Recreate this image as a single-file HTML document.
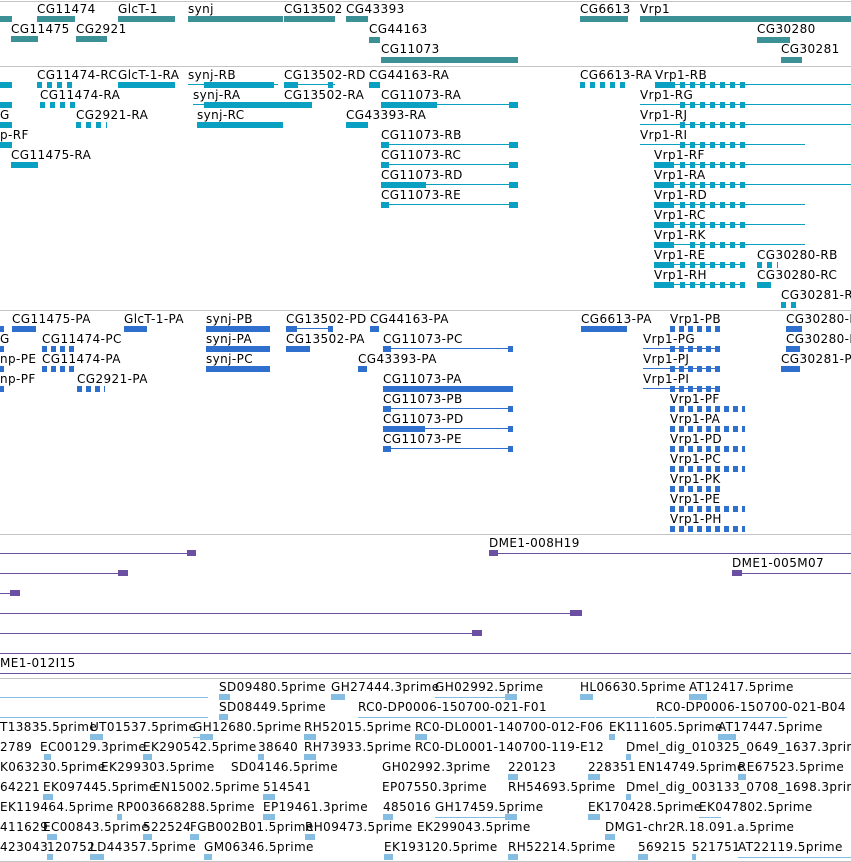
<!DOCTYPE html>
<html><head><meta charset="utf-8"><style>
body{margin:0;width:851px;height:862px;background:#fff;position:relative;overflow:hidden;font-family:"DejaVu Sans","Liberation Sans",sans-serif}
.l{position:absolute;font-size:12px;line-height:12px;white-space:nowrap;color:#000;letter-spacing:0.4px}
.b{position:absolute;height:6px}
.n{position:absolute;height:1px}
.s{position:absolute;left:0;width:851px;height:1px;background:#c4c4c4}
.g{background:#3c9196}.t{background:#0aa0c2}.p{background:#2f6fce}.u{background:#6a4fa3}.e{background:#86bde3}
.tr{background:repeating-linear-gradient(90deg,#0aa0c2 0 5px,transparent 5px 10px)}
.pr{background:repeating-linear-gradient(90deg,#2f6fce 0 5px,transparent 5px 9px)}
</style></head><body>
<div class="s" style="top:1px"></div>
<div class="l" style="left:37px;top:3px">CG11474</div><div class="b g" style="left:37px;top:16px;width:38px"></div>
<div class="b g" style="left:0;top:16px;width:12px"></div>
<div class="l" style="left:118px;top:3px">GlcT-1</div><div class="b g" style="left:118px;top:16px;width:57px"></div>
<div class="l" style="left:188px;top:3px">synj</div><div class="b g" style="left:188px;top:16px;width:95px"></div>
<div class="l" style="left:284px;top:3px">CG13502</div><div class="b g" style="left:284px;top:16px;width:51px"></div>
<div class="l" style="left:346px;top:3px">CG43393</div><div class="b g" style="left:346px;top:16px;width:22px"></div>
<div class="l" style="left:580px;top:3px">CG6613</div><div class="b g" style="left:580px;top:16px;width:48px"></div>
<div class="l" style="left:640px;top:3px">Vrp1</div><div class="b g" style="left:640px;top:16px;width:211px"></div>
<div class="l" style="left:11px;top:23px">CG11475</div><div class="b g" style="left:11px;top:36px;width:27px"></div>
<div class="l" style="left:76px;top:23px">CG2921</div><div class="b g" style="left:76px;top:36px;width:31px"></div>
<div class="l" style="left:369px;top:23px">CG44163</div><div class="b g" style="left:369px;top:37px;width:11px"></div>
<div class="l" style="left:757px;top:23px">CG30280</div><div class="b g" style="left:757px;top:37px;width:33px"></div>
<div class="l" style="left:381px;top:43px">CG11073</div><div class="b g" style="left:381px;top:57px;width:137px"></div>
<div class="l" style="left:781px;top:43px">CG30281</div><div class="b g" style="left:781px;top:57px;width:21px"></div>
<div class="s" style="top:66px"></div>
<div class="b t" style="left:0;top:82px;width:12px"></div>
<div class="l" style="left:37px;top:69px">CG11474-RC</div><div class="b tr" style="left:37px;top:82px;width:38px"></div>
<div class="l" style="left:118px;top:69px">GlcT-1-RA</div><div class="b t" style="left:118px;top:82px;width:57px"></div>
<div class="l" style="left:188px;top:69px">synj-RB</div><div class="n t" style="left:188px;top:84px;width:90px"></div><div class="b t" style="left:204px;top:82px;width:70px"></div>
<div class="l" style="left:284px;top:69px">CG13502-RD</div><div class="n t" style="left:284px;top:84px;width:51px"></div><div class="b t" style="left:284px;top:82px;width:14px"></div><div class="b t" style="left:328px;top:82px;width:5px"></div>
<div class="l" style="left:369px;top:69px">CG44163-RA</div><div class="b t" style="left:369px;top:82px;width:11px"></div>
<div class="l" style="left:580px;top:69px">CG6613-RA</div><div class="b tr" style="left:580px;top:82px;width:48px"></div>
<div class="l" style="left:655px;top:69px">Vrp1-RB</div><div class="n t" style="left:655px;top:84px;width:196px"></div><div class="b t" style="left:655px;top:82px;width:20px"></div><div class="b tr" style="left:680px;top:82px;width:65px"></div>
<div class="b t" style="left:0;top:102px;width:12px"></div>
<div class="l" style="left:40px;top:89px">CG11474-RA</div><div class="b tr" style="left:40px;top:102px;width:35px"></div>
<div class="l" style="left:193px;top:89px">synj-RA</div><div class="n t" style="left:193px;top:104px;width:90px"></div><div class="b t" style="left:204px;top:102px;width:108px"></div>
<div class="l" style="left:284px;top:89px">CG13502-RA</div>
<div class="l" style="left:381px;top:89px">CG11073-RA</div><div class="n t" style="left:381px;top:104px;width:137px"></div><div class="b t" style="left:381px;top:102px;width:56px"></div><div class="b t" style="left:509px;top:102px;width:9px"></div>
<div class="l" style="left:640px;top:89px">Vrp1-RG</div><div class="n t" style="left:640px;top:104px;width:211px"></div><div class="b tr" style="left:680px;top:102px;width:65px"></div>
<div class="l" style="left:0;top:109px">G</div><div class="b t" style="left:0;top:122px;width:12px"></div>
<div class="l" style="left:76px;top:109px">CG2921-RA</div><div class="b tr" style="left:76px;top:122px;width:31px"></div>
<div class="l" style="left:197px;top:109px">synj-RC</div><div class="b t" style="left:197px;top:122px;width:86px"></div>
<div class="l" style="left:346px;top:109px">CG43393-RA</div><div class="b t" style="left:346px;top:122px;width:22px"></div>
<div class="l" style="left:640px;top:109px">Vrp1-RJ</div><div class="n t" style="left:640px;top:124px;width:211px"></div><div class="b tr" style="left:680px;top:122px;width:65px"></div>
<div class="l" style="left:0;top:129px">p-RF</div><div class="b t" style="left:0;top:142px;width:12px"></div>
<div class="l" style="left:381px;top:129px">CG11073-RB</div><div class="n t" style="left:381px;top:144px;width:137px"></div><div class="b t" style="left:381px;top:142px;width:8px"></div><div class="b t" style="left:509px;top:142px;width:9px"></div>
<div class="l" style="left:640px;top:129px">Vrp1-RI</div><div class="n t" style="left:640px;top:144px;width:165px"></div><div class="b tr" style="left:680px;top:142px;width:65px"></div>
<div class="l" style="left:11px;top:149px">CG11475-RA</div><div class="b t" style="left:11px;top:162px;width:27px"></div>
<div class="l" style="left:381px;top:149px">CG11073-RC</div><div class="n t" style="left:381px;top:164px;width:137px"></div><div class="b t" style="left:381px;top:162px;width:8px"></div><div class="b t" style="left:509px;top:162px;width:9px"></div>
<div class="l" style="left:654px;top:149px">Vrp1-RF</div><div class="n t" style="left:654px;top:164px;width:197px"></div><div class="b t" style="left:654px;top:162px;width:20px"></div><div class="b tr" style="left:680px;top:162px;width:65px"></div>
<div class="l" style="left:381px;top:169px">CG11073-RD</div><div class="n t" style="left:381px;top:184px;width:137px"></div><div class="b t" style="left:381px;top:182px;width:45px"></div><div class="b t" style="left:509px;top:182px;width:9px"></div>
<div class="l" style="left:654px;top:169px">Vrp1-RA</div><div class="n t" style="left:654px;top:184px;width:197px"></div><div class="b t" style="left:654px;top:182px;width:20px"></div><div class="b tr" style="left:680px;top:182px;width:65px"></div>
<div class="l" style="left:381px;top:189px">CG11073-RE</div><div class="n t" style="left:381px;top:204px;width:137px"></div><div class="b t" style="left:381px;top:202px;width:8px"></div><div class="b t" style="left:509px;top:202px;width:9px"></div>
<div class="l" style="left:654px;top:189px">Vrp1-RD</div><div class="n t" style="left:654px;top:204px;width:151px"></div><div class="b t" style="left:654px;top:202px;width:20px"></div><div class="b tr" style="left:680px;top:202px;width:65px"></div>
<div class="l" style="left:654px;top:209px">Vrp1-RC</div><div class="n t" style="left:654px;top:224px;width:151px"></div><div class="b t" style="left:654px;top:222px;width:20px"></div><div class="b tr" style="left:680px;top:222px;width:65px"></div>
<div class="l" style="left:654px;top:229px">Vrp1-RK</div><div class="n t" style="left:654px;top:244px;width:151px"></div><div class="b t" style="left:654px;top:242px;width:20px"></div><div class="b tr" style="left:690px;top:242px;width:55px"></div>
<div class="l" style="left:654px;top:249px">Vrp1-RE</div><div class="n t" style="left:654px;top:264px;width:91px"></div><div class="b t" style="left:654px;top:262px;width:20px"></div><div class="b tr" style="left:680px;top:262px;width:65px"></div>
<div class="l" style="left:757px;top:249px">CG30280-RB</div><div class="b tr" style="left:757px;top:262px;width:21px"></div>
<div class="l" style="left:654px;top:269px">Vrp1-RH</div><div class="n t" style="left:654px;top:284px;width:91px"></div><div class="b t" style="left:654px;top:282px;width:20px"></div><div class="b tr" style="left:680px;top:282px;width:65px"></div>
<div class="l" style="left:757px;top:269px">CG30280-RC</div><div class="b t" style="left:757px;top:282px;width:14px"></div>
<div class="l" style="left:781px;top:289px">CG30281-R</div><div class="b tr" style="left:781px;top:302px;width:19px"></div>
<div class="s" style="top:310px"></div>
<div class="b p" style="left:0;top:326px;width:4px"></div>
<div class="l" style="left:12px;top:313px">CG11475-PA</div><div class="b p" style="left:12px;top:326px;width:24px"></div>
<div class="l" style="left:124px;top:313px">GlcT-1-PA</div><div class="b p" style="left:124px;top:326px;width:23px"></div>
<div class="l" style="left:206px;top:313px">synj-PB</div><div class="b p" style="left:206px;top:326px;width:64px"></div>
<div class="l" style="left:286px;top:313px">CG13502-PD</div><div class="n p" style="left:286px;top:328px;width:47px"></div><div class="b p" style="left:286px;top:326px;width:11px"></div><div class="b p" style="left:328px;top:326px;width:5px"></div>
<div class="l" style="left:370px;top:313px">CG44163-PA</div><div class="b p" style="left:370px;top:326px;width:9px"></div>
<div class="l" style="left:581px;top:313px">CG6613-PA</div><div class="b p" style="left:581px;top:326px;width:46px"></div>
<div class="l" style="left:670px;top:313px">Vrp1-PB</div><div class="b pr" style="left:670px;top:326px;width:50px"></div>
<div class="l" style="left:786px;top:313px">CG30280-PB</div><div class="b p" style="left:786px;top:326px;width:16px"></div>
<div class="l" style="left:0;top:333px">G</div><div class="b p" style="left:0;top:346px;width:4px"></div>
<div class="l" style="left:42px;top:333px">CG11474-PC</div><div class="b pr" style="left:42px;top:346px;width:33px"></div>
<div class="l" style="left:206px;top:333px">synj-PA</div><div class="b p" style="left:206px;top:346px;width:64px"></div>
<div class="l" style="left:286px;top:333px">CG13502-PA</div><div class="b p" style="left:286px;top:346px;width:24px"></div>
<div class="l" style="left:383px;top:333px">CG11073-PC</div><div class="n p" style="left:383px;top:348px;width:130px"></div><div class="b p" style="left:383px;top:346px;width:8px"></div><div class="b p" style="left:508px;top:346px;width:5px"></div>
<div class="l" style="left:643px;top:333px">Vrp1-PG</div><div class="n p" style="left:643px;top:348px;width:77px"></div><div class="b pr" style="left:670px;top:346px;width:50px"></div>
<div class="l" style="left:786px;top:333px">CG30280-PC</div><div class="b p" style="left:786px;top:346px;width:14px"></div>
<div class="l" style="left:0;top:353px">np-PE</div><div class="b p" style="left:0;top:366px;width:4px"></div>
<div class="l" style="left:42px;top:353px">CG11474-PA</div><div class="b pr" style="left:42px;top:366px;width:33px"></div>
<div class="l" style="left:206px;top:353px">synj-PC</div><div class="b p" style="left:206px;top:366px;width:64px"></div>
<div class="l" style="left:358px;top:353px">CG43393-PA</div><div class="b p" style="left:358px;top:366px;width:9px"></div>
<div class="l" style="left:643px;top:353px">Vrp1-PJ</div><div class="n p" style="left:643px;top:368px;width:77px"></div><div class="b pr" style="left:670px;top:366px;width:50px"></div>
<div class="l" style="left:781px;top:353px">CG30281-P</div><div class="b p" style="left:781px;top:366px;width:19px"></div>
<div class="l" style="left:0;top:373px">np-PF</div><div class="b p" style="left:0;top:386px;width:4px"></div>
<div class="l" style="left:77px;top:373px">CG2921-PA</div><div class="b pr" style="left:77px;top:386px;width:28px"></div>
<div class="l" style="left:383px;top:373px">CG11073-PA</div><div class="b p" style="left:383px;top:386px;width:130px"></div>
<div class="l" style="left:643px;top:373px">Vrp1-PI</div><div class="n p" style="left:643px;top:388px;width:77px"></div><div class="b pr" style="left:670px;top:386px;width:50px"></div>
<div class="l" style="left:383px;top:393px">CG11073-PB</div><div class="n p" style="left:383px;top:408px;width:130px"></div><div class="b p" style="left:383px;top:406px;width:8px"></div><div class="b p" style="left:508px;top:406px;width:5px"></div>
<div class="l" style="left:670px;top:393px">Vrp1-PF</div><div class="b pr" style="left:670px;top:406px;width:75px"></div>
<div class="l" style="left:383px;top:413px">CG11073-PD</div><div class="n p" style="left:383px;top:428px;width:130px"></div><div class="b p" style="left:383px;top:426px;width:42px"></div><div class="b p" style="left:508px;top:426px;width:5px"></div>
<div class="l" style="left:670px;top:413px">Vrp1-PA</div><div class="b pr" style="left:670px;top:426px;width:75px"></div>
<div class="l" style="left:383px;top:433px">CG11073-PE</div><div class="n p" style="left:383px;top:448px;width:130px"></div><div class="b p" style="left:383px;top:446px;width:8px"></div><div class="b p" style="left:508px;top:446px;width:5px"></div>
<div class="l" style="left:670px;top:433px">Vrp1-PD</div><div class="b pr" style="left:670px;top:446px;width:75px"></div>
<div class="l" style="left:670px;top:453px">Vrp1-PC</div><div class="b pr" style="left:670px;top:466px;width:75px"></div>
<div class="l" style="left:670px;top:473px">Vrp1-PK</div><div class="b pr" style="left:670px;top:486px;width:50px"></div>
<div class="l" style="left:670px;top:493px">Vrp1-PE</div><div class="b pr" style="left:670px;top:506px;width:75px"></div>
<div class="l" style="left:670px;top:513px">Vrp1-PH</div><div class="b pr" style="left:670px;top:526px;width:75px"></div>
<div class="s" style="top:534px"></div>
<div class="n u" style="left:0;top:553px;width:190px"></div><div class="b u" style="left:187px;top:550px;width:9px"></div>
<div class="l" style="left:489px;top:537px">DME1-008H19</div><div class="n u" style="left:489px;top:553px;width:362px"></div><div class="b u" style="left:489px;top:550px;width:9px"></div>
<div class="n u" style="left:0;top:573px;width:125px"></div><div class="b u" style="left:118px;top:570px;width:10px"></div>
<div class="l" style="left:732px;top:557px">DME1-005M07</div><div class="n u" style="left:732px;top:573px;width:119px"></div><div class="b u" style="left:732px;top:570px;width:10px"></div>
<div class="n u" style="left:0;top:593px;width:15px"></div><div class="b u" style="left:10px;top:590px;width:10px"></div>
<div class="n u" style="left:0;top:613px;width:575px"></div><div class="b u" style="left:570px;top:610px;width:12px"></div>
<div class="n u" style="left:0;top:633px;width:475px"></div><div class="b u" style="left:472px;top:630px;width:10px"></div>
<div class="n u" style="left:0;top:653px;width:851px"></div>
<div class="l" style="left:0;top:657px">ME1-012I15</div>
<div class="n u" style="left:0;top:673px;width:851px"></div>
<div class="s" style="top:678px"></div>
<div class="n e" style="left:0;top:697px;width:208px"></div>
<div class="l" style="left:219px;top:681px">SD09480.5prime</div><div class="b e" style="left:219px;top:694px;width:11px"></div>
<div class="l" style="left:331px;top:681px">GH27444.3prime</div><div class="b e" style="left:331px;top:694px;width:14px"></div>
<div class="l" style="left:435px;top:681px">GH02992.5prime</div><div class="n e" style="left:435px;top:697px;width:82px"></div><div class="b e" style="left:505px;top:694px;width:12px"></div>
<div class="l" style="left:580px;top:681px">HL06630.5prime</div><div class="b e" style="left:580px;top:694px;width:13px"></div>
<div class="l" style="left:689px;top:681px">AT12417.5prime</div><div class="b e" style="left:689px;top:694px;width:18px"></div>
<div class="n e" style="left:0;top:717px;width:208px"></div>
<div class="l" style="left:219px;top:701px">SD08449.5prime</div><div class="b e" style="left:219px;top:714px;width:9px"></div>
<div class="l" style="left:358px;top:701px">RC0-DP0006-150700-021-F01</div><div class="n e" style="left:358px;top:717px;width:297px"></div>
<div class="l" style="left:656px;top:701px">RC0-DP0006-150700-021-B04</div><div class="n e" style="left:656px;top:717px;width:131px"></div>
<div class="l" style="left:0;top:721px">T13835.5prime</div>
<div class="l" style="left:90px;top:721px">UT01537.5prime</div><div class="b e" style="left:90px;top:734px;width:13px"></div>
<div class="l" style="left:193px;top:721px">GH12680.5prime</div><div class="n e" style="left:193px;top:737px;width:20px"></div><div class="b e" style="left:200px;top:734px;width:13px"></div>
<div class="l" style="left:304px;top:721px">RH52015.5prime</div><div class="b e" style="left:304px;top:734px;width:12px"></div>
<div class="l" style="left:415px;top:721px">RC0-DL0001-140700-012-F06</div><div class="b e" style="left:415px;top:734px;width:12px"></div>
<div class="l" style="left:609px;top:721px">EK111605.5prime</div><div class="b e" style="left:609px;top:734px;width:6px"></div>
<div class="l" style="left:718px;top:721px">AT17447.5prime</div><div class="b e" style="left:718px;top:734px;width:18px"></div>
<div class="l" style="left:0;top:741px">2789</div>
<div class="l" style="left:40px;top:741px">EC00129.3prime</div><div class="b e" style="left:44px;top:754px;width:7px"></div>
<div class="l" style="left:143px;top:741px">EK290542.5prime</div><div class="b e" style="left:143px;top:754px;width:9px"></div>
<div class="l" style="left:258px;top:741px">38640</div><div class="b e" style="left:258px;top:754px;width:6px"></div>
<div class="l" style="left:304px;top:741px">RH73933.5prime</div><div class="b e" style="left:304px;top:754px;width:12px"></div>
<div class="l" style="left:415px;top:741px">RC0-DL0001-140700-119-E12</div>
<div class="l" style="left:626px;top:741px">Dmel_dig_010325_0649_1637.3prime</div><div class="b e" style="left:626px;top:754px;width:5px"></div>
<div class="l" style="left:0;top:761px">K063230.5prime</div>
<div class="l" style="left:101px;top:761px">EK299303.5prime</div>
<div class="l" style="left:231px;top:761px">SD04146.5prime</div>
<div class="l" style="left:382px;top:761px">GH02992.3prime</div>
<div class="l" style="left:508px;top:761px">220123</div><div class="b e" style="left:508px;top:774px;width:10px"></div>
<div class="l" style="left:588px;top:761px">228351</div><div class="b e" style="left:588px;top:774px;width:12px"></div>
<div class="l" style="left:638px;top:761px">EN14749.5prime</div>
<div class="l" style="left:738px;top:761px">RE67523.5prime</div><div class="b e" style="left:738px;top:774px;width:8px"></div>
<div class="l" style="left:0;top:781px">64221</div>
<div class="l" style="left:43px;top:781px">EK097445.5prime</div><div class="b e" style="left:43px;top:794px;width:10px"></div>
<div class="l" style="left:153px;top:781px">EN15002.5prime</div>
<div class="l" style="left:263px;top:781px">514541</div><div class="b e" style="left:263px;top:794px;width:12px"></div>
<div class="l" style="left:382px;top:781px">EP07550.3prime</div>
<div class="l" style="left:508px;top:781px">RH54693.5prime</div>
<div class="l" style="left:626px;top:781px">Dmel_dig_003133_0708_1698.3prime</div><div class="b e" style="left:626px;top:794px;width:5px"></div>
<div class="l" style="left:0;top:801px">EK119464.5prime</div>
<div class="l" style="left:117px;top:801px">RP003668288.5prime</div><div class="b e" style="left:117px;top:814px;width:5px"></div>
<div class="l" style="left:263px;top:801px">EP19461.3prime</div><div class="b e" style="left:263px;top:814px;width:12px"></div>
<div class="l" style="left:383px;top:801px">485016</div><div class="b e" style="left:383px;top:814px;width:10px"></div>
<div class="l" style="left:435px;top:801px">GH17459.5prime</div><div class="n e" style="left:435px;top:817px;width:82px"></div><div class="b e" style="left:505px;top:814px;width:12px"></div>
<div class="l" style="left:588px;top:801px">EK170428.5prime</div><div class="b e" style="left:588px;top:814px;width:12px"></div>
<div class="l" style="left:699px;top:801px">EK047802.5prime</div><div class="n e" style="left:699px;top:817px;width:22px"></div>
<div class="l" style="left:0;top:821px">411629</div>
<div class="l" style="left:43px;top:821px">EC00843.5prime</div><div class="b e" style="left:47px;top:834px;width:10px"></div>
<div class="l" style="left:143px;top:821px">522524</div><div class="b e" style="left:143px;top:834px;width:9px"></div>
<div class="l" style="left:190px;top:821px">FGB002B01.5prime</div><div class="b e" style="left:190px;top:834px;width:9px"></div>
<div class="l" style="left:305px;top:821px">RH09473.5prime</div><div class="b e" style="left:305px;top:834px;width:10px"></div>
<div class="l" style="left:417px;top:821px">EK299043.5prime</div>
<div class="l" style="left:605px;top:821px">DMG1-chr2R.18.091.a.5prime</div><div class="b e" style="left:605px;top:834px;width:10px"></div>
<div class="l" style="left:0;top:841px">423043</div>
<div class="l" style="left:47px;top:841px">120752</div><div class="b e" style="left:47px;top:854px;width:6px"></div>
<div class="l" style="left:90px;top:841px">LD44357.5prime</div><div class="b e" style="left:90px;top:854px;width:14px"></div>
<div class="l" style="left:204px;top:841px">GM06346.5prime</div><div class="b e" style="left:204px;top:854px;width:8px"></div>
<div class="l" style="left:384px;top:841px">EK193120.5prime</div><div class="b e" style="left:384px;top:854px;width:9px"></div>
<div class="l" style="left:508px;top:841px">RH52214.5prime</div><div class="b e" style="left:508px;top:854px;width:10px"></div>
<div class="l" style="left:638px;top:841px">569215</div><div class="b e" style="left:638px;top:854px;width:10px"></div>
<div class="l" style="left:692px;top:841px">521751</div><div class="b e" style="left:692px;top:854px;width:4px"></div>
<div class="l" style="left:738px;top:841px">AT22119.5prime</div><div class="n e" style="left:738px;top:857px;width:113px"></div>
<div class="s" style="top:861px"></div>
</body></html>
